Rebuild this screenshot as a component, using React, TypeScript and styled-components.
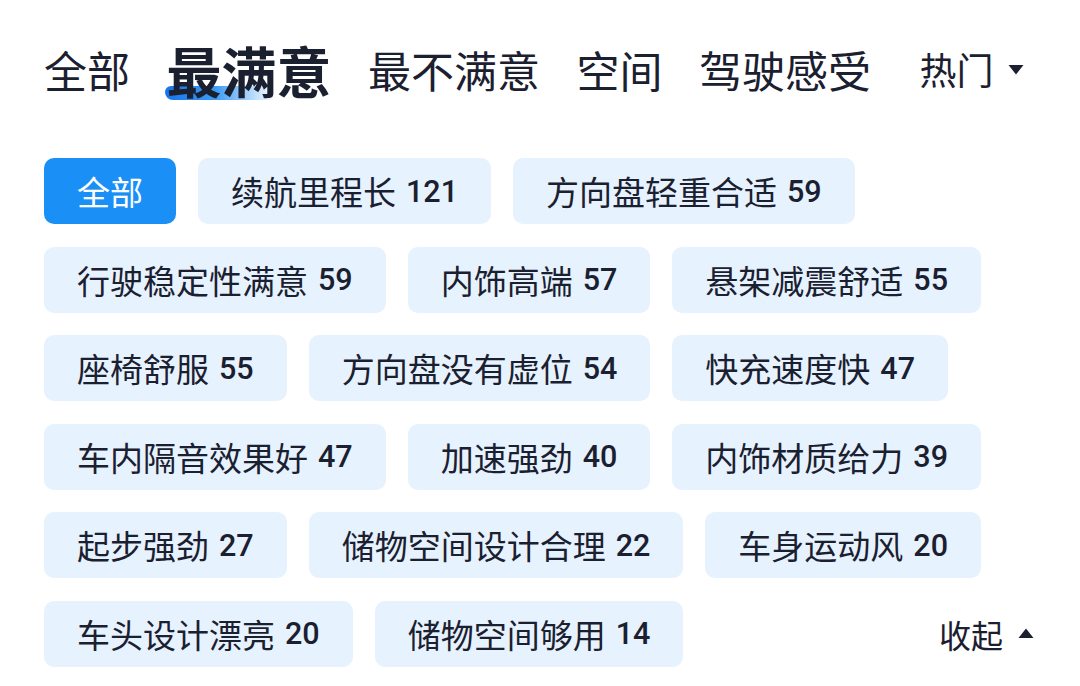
import React, { useState } from "react";
import styled, { createGlobalStyle } from "styled-components";

const GlobalStyle = createGlobalStyle`
  html, body {
    margin: 0;
    padding: 0;
    background: #ffffff;
  }
  body {
    font-family: "Noto Sans CJK SC", "Noto Sans", sans-serif;
    color: #1b2030;
  }
`;

const Page = styled.div`
  width: 1080px;
  height: 686px;
  box-sizing: border-box;
  padding: 44px 44px 0 44px;
  overflow: hidden;
`;

const TabBar = styled.div`
  display: flex;
  align-items: center;
  gap: 36.5px;
  height: 50px;
`;

const Tab = styled.div<{ active?: boolean }>`
  position: relative;
  font-size: ${({ active }) => (active ? "55px" : "43px")};
  font-weight: ${({ active }) => (active ? 700 : 400)};
  line-height: 50px;
  white-space: nowrap;
  z-index: 0;
`;

const TabMark = styled.span`
  position: absolute;
  left: -2px;
  bottom: -6px;
  width: 110px;
  height: 14px;
  border-radius: 6px 2px 2px 8px;
  background: linear-gradient(90deg, #1773ea 0%, #3a9bf5 45%, rgba(120, 190, 250, 0) 100%);
  z-index: -1;
`;

const SortMenu = styled.div`
  margin-left: 12px;
  display: flex;
  align-items: center;
  gap: 14px;
  font-size: 37px;
  line-height: 50px;
`;

const Caret = styled.svg`
  display: block;
  flex-shrink: 0;
  width: 16px;
  height: 11px;
  fill: #1b2030;
`;

const TagList = styled.div`
  display: flex;
  flex-wrap: wrap;
  column-gap: 22px;
  row-gap: 22.6px;
  margin-top: 64px;
  width: 992px;
`;

const Tag = styled.div<{ active?: boolean }>`
  display: flex;
  align-items: center;
  height: 66px;
  padding: 0 33px;
  border-radius: 10px;
  font-size: 33px;
  white-space: nowrap;
  background: ${({ active }) => (active ? "#1a8ff6" : "#e6f2fd")};
  color: ${({ active }) => (active ? "#ffffff" : "#1b2030")};
`;

const Count = styled.span`
  margin-left: 10px;
  font-family: Roboto, "Noto Sans", sans-serif;
  font-weight: 500;
  font-size: 30.5px;
`;

const Collapse = styled.div`
  margin-left: auto;
  display: flex;
  align-items: center;
  gap: 15px;
  height: 66px;
  padding-right: 2px;
  font-size: 32px;
`;

const tabs = ["全部", "最满意", "最不满意", "空间", "驾驶感受"];

const tags: [string, number | null][] = [
  ["全部", null],
  ["续航里程长", 121],
  ["方向盘轻重合适", 59],
  ["行驶稳定性满意", 59],
  ["内饰高端", 57],
  ["悬架减震舒适", 55],
  ["座椅舒服", 55],
  ["方向盘没有虚位", 54],
  ["快充速度快", 47],
  ["车内隔音效果好", 47],
  ["加速强劲", 40],
  ["内饰材质给力", 39],
  ["起步强劲", 27],
  ["储物空间设计合理", 22],
  ["车身运动风", 20],
  ["车头设计漂亮", 20],
  ["储物空间够用", 14],
];

export default function App() {
  const [tab, setTab] = useState(1);
  const [tag, setTag] = useState(0);

  return (
    <>
      <GlobalStyle />
      <Page>
        <TabBar>
          {tabs.map((t, i) => (
            <Tab key={t} active={i === tab} onClick={() => setTab(i)}>
              {i === tab && <TabMark />}
              {t}
            </Tab>
          ))}
          <SortMenu>
            热门
            <Caret viewBox="0 0 16 11">
              <path d="M0.5 1 L15.5 1 L8 10.5 Z" />
            </Caret>
          </SortMenu>
        </TabBar>

        <TagList>
          {tags.map(([label, count], i) => (
            <Tag key={label + i} active={i === tag} onClick={() => setTag(i)}>
              {label}
              {count !== null && <Count>{count}</Count>}
            </Tag>
          ))}
          <Collapse>
            收起
            <Caret viewBox="0 0 16 11">
              <path d="M0.5 10 L15.5 10 L8 0.5 Z" />
            </Caret>
          </Collapse>
        </TagList>
      </Page>
    </>
  );
}
